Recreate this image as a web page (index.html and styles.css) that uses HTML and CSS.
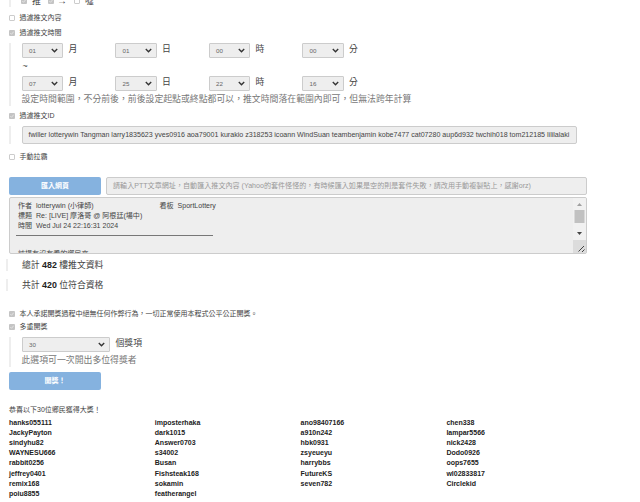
FILE: index.html
```html
<!DOCTYPE html>
<html lang="zh-Hant">
<head>
<meta charset="utf-8">
<title>PTT 推文抽獎</title>
<link rel="stylesheet" href="styles.css">
</head>
<body>
<svg class="defs" width="0" height="0"><defs>
<symbol id="chev" viewBox="0 0 7 5"><path d="M.8 1.1 3.5 3.7 6.2 1.1" fill="none" stroke="#333" stroke-width="1.4"/></symbol>
<symbol id="tick" viewBox="0 0 6 6"><path d="M1.3 3.1 2.5 4.3 4.7 1.7" fill="none" stroke="#e8e8e8" stroke-width=".8"/></symbol>
</defs></svg>
<main class="page">
  <div class="types"><div class="types-in">
    <i class="box on"><svg><use href="#tick"/></svg></i><span>推</span>
    <i class="box on"><svg><use href="#tick"/></svg></i><span class="arrow">→</span>
    <i class="box"></i><span>噓</span>
  </div></div>
  <div class="label content"><i class="box"></i><span>過濾推文內容</span></div>
  <div class="label time"><i class="box on"><svg><use href="#tick"/></svg></i><span>過濾推文時間</span></div>
  <section class="group times">
    <div class="dates">
      <div class="field"><div class="select">01<svg><use href="#chev"/></svg></div><span>月</span></div>
      <div class="field"><div class="select">01<svg><use href="#chev"/></svg></div><span>日</span></div>
      <div class="field"><div class="select">00<svg><use href="#chev"/></svg></div><span>時</span></div>
      <div class="field"><div class="select">00<svg><use href="#chev"/></svg></div><span>分</span></div>
    </div>
    <div class="tilde">~</div>
    <div class="dates">
      <div class="field"><div class="select">07<svg><use href="#chev"/></svg></div><span>月</span></div>
      <div class="field"><div class="select">25<svg><use href="#chev"/></svg></div><span>日</span></div>
      <div class="field"><div class="select">22<svg><use href="#chev"/></svg></div><span>時</span></div>
      <div class="field"><div class="select">16<svg><use href="#chev"/></svg></div><span>分</span></div>
    </div>
    <p class="hint">設定時間範圍，不分前後，前後設定起點或終點都可以，推文時間落在範圍內即可，但無法跨年計算</p>
  </section>
  <div class="label ids"><i class="box on"><svg><use href="#tick"/></svg></i><span>過濾推文ID</span></div>
  <section class="group"><div class="input id-input">fwiller lotterywin Tangman larry1835623 yves0916 aoa79001 kurakio z318253 icoann WindSuan teambenjamin kobe7477 cat07280 aup6d932 twchih018 tom212185 lililalaki</div></section>
  <div class="label slot"><i class="box"></i><span>手動拉霸</span></div>
  <div class="import">
    <div class="button">匯入網頁</div>
    <div class="input url">請輸入PTT文章網址，自動匯入推文內容 (Yahoo的套件怪怪的，有時候匯入如果是空的則是套件失敗，請改用手動複製貼上，感謝orz)</div>
  </div>
  <div class="textarea">
    <div class="article">
      <div class="meta"><span class="author">作者&nbsp; lotterywin (小律師)</span><span>看板&nbsp; SportLottery</span></div>
      <div class="meta">標題&nbsp; Re: [LIVE] 摩洛哥 @ 阿根廷(場中)</div>
      <div class="meta">時間&nbsp; Wed Jul 24 22:16:31 2024</div>
      <div class="rule"></div>
      <div class="cut">該場有沒有看的鄉民來</div>
    </div>
    <div class="scroll">
      <svg viewBox="0 0 13 55" width="13" height="55"><path d="M0 0h13v42H0z" fill="#f1f1f1"/><path d="M0 42h13v13H0z" fill="#dcdcdc"/><path d="M1.5 12h10v13h-10z" fill="#c1c1c1"/><path d="M4 8 6.500 5 9 8z" fill="#a0a0a0"/><path d="M4 34h5L6.500 37z" fill="#444"/><path d="M5.500 53.500 11 48M9 54l2.500-2.500" fill="none" stroke="#444"/></svg>
    </div>
  </div>
  <div class="stats">
    <p>總計 <b>482</b> 樓推文資料</p>
    <p>共計 <b>420</b> 位符合資格</p>
  </div>
  <div class="label agree"><i class="box on"><svg><use href="#tick"/></svg></i><span>本人承諾開獎過程中絕無任何作弊行為，一切正常使用本程式公平公正開獎。</span></div>
  <div class="label multi"><i class="box on"><svg><use href="#tick"/></svg></i><span>多重開獎</span></div>
  <section class="group prizes">
    <div class="field"><div class="select wide">30<svg><use href="#chev"/></svg></div><span>個獎項</span></div>
    <p class="hint">此選項可一次開出多位得獎者</p>
  </section>
  <div class="button draw">開獎！</div>
  <p class="congrats">恭喜以下30位鄉民獲得大獎！</p>
  <div class="winners">
    <span>hanks055111</span><span>imposterhaka</span><span>ano98407166</span><span>chen338</span>
    <span>JackyPayton</span><span>dark1015</span><span>a910n242</span><span>lampar5566</span>
    <span>sindyhu82</span><span>Answer0703</span><span>hbk0931</span><span>nick2428</span>
    <span>WAYNESU666</span><span>s34002</span><span>zsyeueyu</span><span>Dodo0926</span>
    <span>rabbit0256</span><span>Busan</span><span>harrybbs</span><span>oops7655</span>
    <span>jeffrey0401</span><span>Fishsteak168</span><span>FutureKS</span><span>wl02833817</span>
    <span>remix168</span><span>sokamin</span><span>seven782</span><span>Circlekid</span>
    <span>poiu8855</span><span>featherangel</span>
  </div>
</main>
</body>
</html>
```
FILE: styles.css
```css
* { box-sizing: border-box; }
body { margin: 0; background: #fff; color: #444; font: 7px/10px "Liberation Sans", "Noto Sans CJK TC", sans-serif; overflow: hidden; }
p { margin: 0; }
.defs { display: block; height: 0; }
.page { width: 640px; height: 502px; padding-left: 9px; overflow: hidden; }

.types { height: 7px; border-left: 2px solid #eee; padding-left: 10px; overflow: hidden; }
.types-in { display: flex; align-items: center; height: 12px; margin-top: -5px; font-size: 8.84px; }
.types-in span { width: 16.5px; padding-left: 5px; margin-right: 4px; white-space: nowrap; }
.types-in .arrow { padding-left: 3.500px; font-size: 10px; }

.box { flex: none; width: 6px; height: 6px; border: 1px solid #ccc; border-radius: 1px; background: #fff; }
.box.on { border: 0; background: #c4c4c4; }
.box svg { display: block; width: 6px; height: 6px; }

.label { display: flex; align-items: center; gap: 4.5px; height: 10px; }
.content { margin-top: 5.500px; }
.time { margin-top: 5.500px; }
.ids { margin-top: 5px; }
.slot { margin-top: 7.500px; }
.agree { margin-top: 13.500px; }
.multi { margin-top: 3px; }

.group { border-left: 2px solid #eee; padding-left: 10.5px; }
.times { height: 63px; margin-top: 5px; }
.ids + .group { height: 18px; margin-top: 5px; }
.prizes { height: 30px; margin-top: 5.5px; }

.dates { display: grid; grid-template-columns: repeat(4, 93.5px); height: 15px; }
.field { display: flex; gap: 5.5px; height: 15px; font-size: 8.84px; line-height: 12px; }
.select { display: flex; align-items: center; justify-content: space-between; width: 41.5px; height: 15px; padding: 0 4px 0 6.5px; border: 1px solid #ccc; border-radius: 1px; background: #eee; color: #666; font-size: 6.2px; }
.select svg { width: 7px; height: 5px; }
.select.wide { width: 88.500px; }
.tilde { height: 18px; padding-left: 1px; font-size: 8.84px; line-height: 16px; }
.hint { height: 15px; color: #777; font-size: 8.87px; line-height: 17px; white-space: nowrap; }

.input { height: 18px; padding: 0 6px; border: 1px solid #ccc; border-radius: 2px; background: #eee; font-size: 7.080px; line-height: 16px; white-space: nowrap; overflow: hidden; }
.id-input { width: 555.500px; }
.import { display: flex; gap: 5px; margin-top: 15.500px; }
.url { width: 480.500px; color: #999; }
.button { width: 92px; height: 17.500px; border-radius: 2px; background: #85b2df; color: #fff; font-weight: bold; line-height: 17px; text-align: center; }

.textarea { display: flex; justify-content: space-between; width: 578px; height: 57px; margin-top: 2px; border: 1px solid #ccc; border-radius: 2px; background: #eee; overflow: hidden; }
.article { padding: 2.500px 0 0 8px; font-size: 7.050px; }
.meta { display: flex; height: 10.3px; white-space: nowrap; }
.author { width: 141.500px; }
.rule { width: 197px; height: 1px; margin: 4px 0 0 -2px; background: #777; }
.cut { margin-top: 13px; }
.scroll { width: 13px; }

.stats { margin-top: 1px; }
.stats p { height: 20px; padding-left: 13px; font-size: 8.84px; line-height: 20px; position: relative; }
.stats p::before { content: ""; position: absolute; left: -3px; top: 4px; width: 2px; height: 12px; background: #eee; }
.stats b { color: #222; }

.draw { margin-top: 5px; }
.congrats { margin-top: 15px; }
.winners { display: grid; grid-template-columns: repeat(4, 145.800px); grid-auto-rows: 10.15px; margin-top: 3.4px; color: #222; font-weight: bold; }
```
